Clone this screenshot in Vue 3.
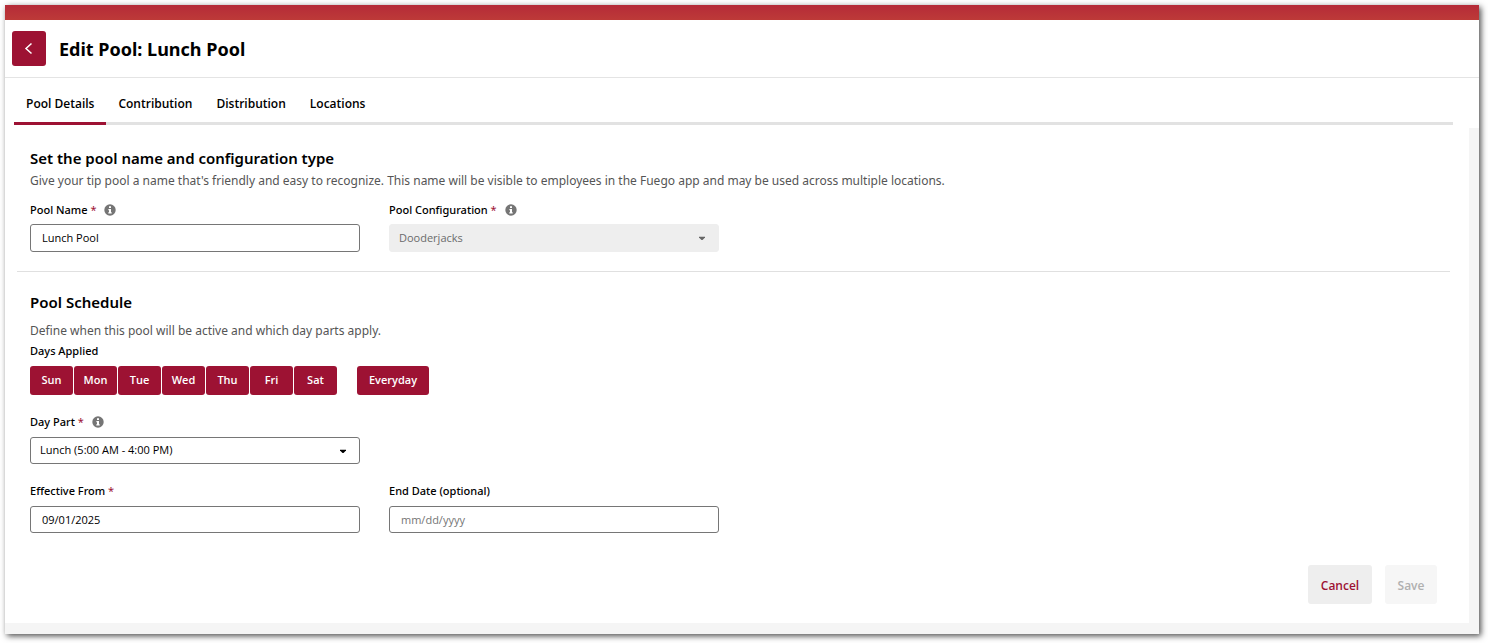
<script setup>
import { ref } from 'vue'

const tabs = ['Pool Details', 'Contribution', 'Distribution', 'Locations']
const activeTab = ref('Pool Details')
const days = ['Sun', 'Mon', 'Tue', 'Wed', 'Thu', 'Fri', 'Sat']
const selected = ref([...days])
const poolName = ref('Lunch Pool')
const configuration = ref('Dooderjacks')
const dayPart = ref('lunch')
const effectiveFrom = ref('09/01/2025')
const endDate = ref('')

function toggleDay(day) {
  selected.value = selected.value.includes(day)
    ? selected.value.filter((d) => d !== day)
    : [...selected.value, day]
}
function selectAll() {
  selected.value = [...days]
}
</script>

<template>
  <div class="window">
    <div class="brand-bar"></div>
    <header class="header">
      <button class="back" type="button" aria-label="Back">
        <svg viewBox="0 0 12 14" width="12" height="14" aria-hidden="true">
          <path d="M8.500 1.500 3 6.500l5.500 5" fill="none" stroke="#fff" stroke-width="1.500" />
        </svg>
      </button>
      <h1>Edit Pool: Lunch Pool</h1>
    </header>

    <nav class="tabs">
      <button
        v-for="tab in tabs"
        :key="tab"
        type="button"
        class="tab"
        :class="{ active: tab === activeTab }"
        @click="activeTab = tab"
      >{{ tab }}</button>
    </nav>

    <div class="scroller">
      <main class="panel">
        <section class="section">
          <h2>Set the pool name and configuration type</h2>
          <p class="intro">Give your tip pool a name that's friendly and easy to recognize. This name will be visible to employees in the Fuego app and may be used across multiple locations.</p>
          <div class="fields">
            <div class="field">
              <div class="label-row">
                <label for="pool-name">Pool Name <span class="required">*</span></label>
                <svg class="info" viewBox="0 0 12 12" aria-hidden="true">
                  <circle cx="6" cy="6" r="5.700" fill="#757575" />
                  <path d="M5 2.300h2v1.700H5zM4.400 5H7v3.300h.7v1.200H4.300V8.300H5V6.200h-.6z" fill="#fff" />
                </svg>
              </div>
              <input id="pool-name" v-model="poolName" class="control" type="text" />
            </div>
            <div class="field">
              <div class="label-row">
                <label for="pool-config">Pool Configuration <span class="required">*</span></label>
                <svg class="info" viewBox="0 0 12 12" aria-hidden="true">
                  <circle cx="6" cy="6" r="5.700" fill="#757575" />
                  <path d="M5 2.300h2v1.700H5zM4.400 5H7v3.300h.7v1.200H4.300V8.300H5V6.200h-.6z" fill="#fff" />
                </svg>
              </div>
              <div class="select-wrap">
                <select id="pool-config" v-model="configuration" class="control" disabled>
                  <option>Dooderjacks</option>
                </select>
                <svg class="caret muted" viewBox="0 0 8 5" aria-hidden="true"><path d="M1 .7h6v.8L4.500 4h-1L1 1.500z" /></svg>
              </div>
            </div>
          </div>
        </section>

        <hr />

        <section class="section schedule">
          <h2>Pool Schedule</h2>
          <p class="intro">Define when this pool will be active and which day parts apply.</p>
          <div id="days-label" class="group-label">Days Applied</div>
          <div class="days" role="group" aria-labelledby="days-label">
            <button
              v-for="day in days"
              :key="day"
              type="button"
              class="day"
              :class="{ off: !selected.includes(day) }"
              :aria-pressed="selected.includes(day)"
              @click="toggleDay(day)"
            >{{ day }}</button>
            <button type="button" class="day everyday" @click="selectAll">Everyday</button>
          </div>

          <div class="fields">
            <div class="field">
              <div class="label-row">
                <label for="day-part">Day Part <span class="required">*</span></label>
                <svg class="info" viewBox="0 0 12 12" aria-hidden="true">
                  <circle cx="6" cy="6" r="5.700" fill="#757575" />
                  <path d="M5 2.300h2v1.700H5zM4.400 5H7v3.300h.7v1.200H4.300V8.300H5V6.200h-.6z" fill="#fff" />
                </svg>
              </div>
              <div class="select-wrap">
                <select id="day-part" v-model="dayPart" class="control">
                  <option value="lunch">Lunch (5:00 AM - 4:00 PM)</option>
                </select>
                <svg class="caret" viewBox="0 0 8 5" aria-hidden="true"><path d="M1 .7h6v.8L4.500 4h-1L1 1.500z" /></svg>
              </div>
            </div>
          </div>

          <div class="fields">
            <div class="field">
              <div class="label-row">
                <label for="from">Effective From <span class="required">*</span></label>
              </div>
              <input id="from" v-model="effectiveFrom" class="control" type="text" />
            </div>
            <div class="field">
              <div class="label-row"><label for="end">End Date (optional)</label></div>
              <input id="end" v-model="endDate" class="control" type="text" placeholder="mm/dd/yyyy" />
            </div>
          </div>
        </section>

        <footer class="actions">
          <button type="button" class="action cancel">Cancel</button>
          <button type="button" class="action save" disabled>Save</button>
        </footer>
      </main>
    </div>
  </div>
</template>

<style>
body {
  background: #fff;
}
</style>

<style scoped>
.window {
  box-sizing: border-box;
  display: flex;
  flex-direction: column;
  min-height: calc(100vh - 14px);
  margin: 5px 9px 9px 5px;
  background: #fff;
  box-shadow: 2px 2px 6px rgba(0, 0, 0, 0.7);
  color: #000;
  font-family: "Open Sans", "Noto Sans", sans-serif;
  font-size: 11px;
  line-height: 16px;
}
button,
input,
select {
  font: inherit;
}
button {
  padding: 0;
  border: 0;
  cursor: pointer;
}
h1,
h2,
p {
  margin: 0;
}
.brand-bar {
  height: 15px;
  background: linear-gradient(#b52b38, #bd3a38);
}
.header {
  display: flex;
  align-items: center;
  gap: 13px;
  height: 57px;
  padding: 0 7px;
  border-bottom: 1px solid #e4e4e4;
}
.back {
  display: flex;
  align-items: center;
  justify-content: center;
  width: 34px;
  height: 35px;
  border-radius: 3px;
  background: #9d1233;
}
h1 {
  font-family: "Noto Sans", sans-serif;
  font-size: 18px;
  font-weight: 700;
  line-height: 24px;
}
.tabs {
  display: flex;
  margin: 0 26px 0 9px;
  padding-top: 4px;
  border-bottom: 3px solid #e2e2e2;
}
.tab {
  height: 43px;
  margin-bottom: -3px;
  padding: 4px 12px 0;
  border-bottom: 3px solid transparent;
  background: none;
  font-size: 12px;
  font-weight: 600;
}
.tab.active {
  border-color: #9d1233;
}
.scroller {
  flex: 1;
  display: flex;
  margin-top: 3px;
  padding: 0 10px 11px 0;
  background: #f5f5f5;
}
.panel {
  flex: 1;
  display: flex;
  flex-direction: column;
  padding: 18px 19px 19px 12px;
  background: #fff;
}
.section {
  padding-left: 13px;
}
h2 {
  font-family: "Noto Sans", sans-serif;
  font-size: 15px;
  font-weight: 600;
  line-height: 24px;
}
.intro {
  margin: 1px 0 11px;
  color: #555;
  font-family: "Noto Sans", sans-serif;
  font-size: 12px;
  line-height: 20px;
}
.fields {
  display: grid;
  grid-template-columns: repeat(2, minmax(0, 330px));
  gap: 29px;
}
.label-row {
  display: flex;
  align-items: center;
  gap: 8px;
  height: 16px;
  margin-bottom: 6px;
}
label,
.group-label {
  font-family: "Noto Sans", sans-serif;
  font-weight: 500;
}
.required {
  color: #9d1233;
  font-weight: 400;
}
.info {
  width: 12px;
  height: 12px;
}
.control {
  box-sizing: border-box;
  display: block;
  width: 100%;
  height: 28px;
  padding: 0 11px 1px;
  border: 1px solid #767676;
  border-radius: 3px;
  background: #fff;
  color: #000;
}
.control::placeholder {
  color: #757575;
  opacity: 1;
}
.select-wrap {
  position: relative;
}
select.control {
  padding: 0 9px 1px;
  appearance: none;
}
select.control:disabled {
  border-color: #eee;
  background: #eee;
  color: #6b6b6b;
  opacity: 1;
}
.caret {
  position: absolute;
  top: 12px;
  right: 13px;
  width: 8px;
  height: 5px;
  pointer-events: none;
}
.caret.muted {
  fill: #666;
}
hr {
  width: 100%;
  margin: 19px 0 18px;
  border: 0;
  border-top: 1px solid #e0e0e0;
}
.schedule .intro {
  margin: 7px 0 2px;
}
.schedule .control {
  height: 27px;
}
.schedule input.control {
  padding-bottom: 0;
}
.days {
  display: flex;
  gap: 1px;
  margin-top: 7px;
}
.day {
  width: 43px;
  height: 29px;
  padding-bottom: 2px;
  border-radius: 3px;
  background: #9d1233;
  color: #fff;
  font-weight: 600;
}
.day.off {
  background: #eee;
  color: #9d1233;
}
.everyday {
  width: 72px;
  margin-left: 19px;
}
.schedule .fields {
  margin-top: 19px;
}
.schedule .label-row {
  margin-bottom: 7px;
}
.actions {
  display: flex;
  justify-content: flex-end;
  gap: 13px;
  margin-top: auto;
  padding: 32px 13px 0 0;
}
.action {
  height: 39px;
  padding-top: 2px;
  border-radius: 3px;
  font-size: 12px;
  font-weight: 600;
}
.cancel {
  width: 64px;
  background: #eee;
  color: #9d1233;
}
.save {
  width: 52px;
  background: #f6f6f6;
  color: #b0b0b0;
}
</style>
